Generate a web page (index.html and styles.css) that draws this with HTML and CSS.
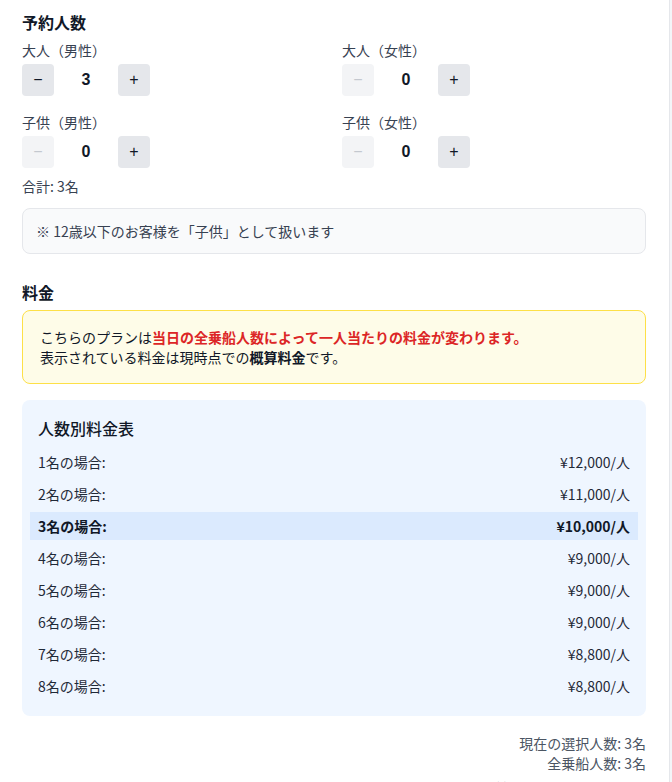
FILE: index.html
```html
<!DOCTYPE html>
<html lang="ja">
<head>
  <meta charset="utf-8">
  <title>予約人数と料金</title>
  <link rel="stylesheet" href="styles.css">
</head>
<body>
  <div class="page">
    <!-- 予約人数 -->
    <section class="section">
      <h2 class="section-title">予約人数</h2>
      <div class="counter-grid">
        <div class="counter-item">
          <div class="counter-label">大人（男性）</div>
          <div class="counter">
            <button class="counter-btn">&minus;</button>
            <span class="counter-value">3</span>
            <button class="counter-btn">+</button>
          </div>
        </div>
        <div class="counter-item">
          <div class="counter-label">大人（女性）</div>
          <div class="counter">
            <button class="counter-btn" disabled>&minus;</button>
            <span class="counter-value">0</span>
            <button class="counter-btn">+</button>
          </div>
        </div>
        <div class="counter-item">
          <div class="counter-label">子供（男性）</div>
          <div class="counter">
            <button class="counter-btn" disabled>&minus;</button>
            <span class="counter-value">0</span>
            <button class="counter-btn">+</button>
          </div>
        </div>
        <div class="counter-item">
          <div class="counter-label">子供（女性）</div>
          <div class="counter">
            <button class="counter-btn" disabled>&minus;</button>
            <span class="counter-value">0</span>
            <button class="counter-btn">+</button>
          </div>
        </div>
      </div>
      <div class="total">合計: 3名</div>
      <div class="note">※ 12歳以下のお客様を「子供」として扱います</div>
    </section>

    <!-- 料金 -->
    <section class="section section-price">
      <h2 class="section-title">料金</h2>
      <div class="notice">
        こちらのプランは<strong class="text-red">当日の全乗船人数によって一人当たりの料金が変わります。</strong><br>
        表示されている料金は現時点での<strong>概算料金</strong>です。
      </div>

      <div class="price-table">
        <h3 class="price-table-title">人数別料金表</h3>
        <div class="price-row"><span>1名の場合:</span><span>¥12,000/人</span></div>
        <div class="price-row"><span>2名の場合:</span><span>¥11,000/人</span></div>
        <div class="price-row is-current"><span>3名の場合:</span><span>¥10,000/人</span></div>
        <div class="price-row"><span>4名の場合:</span><span>¥9,000/人</span></div>
        <div class="price-row"><span>5名の場合:</span><span>¥9,000/人</span></div>
        <div class="price-row"><span>6名の場合:</span><span>¥9,000/人</span></div>
        <div class="price-row"><span>7名の場合:</span><span>¥8,800/人</span></div>
        <div class="price-row"><span>8名の場合:</span><span>¥8,800/人</span></div>
      </div>

      <div class="summary">
        <div>現在の選択人数: 3名</div>
        <div>全乗船人数: 3名</div>
        <div class="summary-total">概算合計金額: ¥30,000</div>
      </div>
    </section>
  </div>
</body>
</html>
```

FILE: styles.css
```css
/* Base */
body {
  margin: 0;
  background-color: #f3f5f8;
  font-family: "Noto Sans CJK JP", "Noto Sans", sans-serif;
  color: #111827;
}
.page {
  box-sizing: border-box;
  width: 670px;
  min-height: 100vh;
  padding: 10px 23px 0 22px;
  background-color: #fff;
  border-right: 1px solid #e5e7eb;
}
.section-title {
  margin: 0 0 6px;
  font-size: 16px;
  line-height: 24px;
  font-weight: 700;
}
.section-price {
  margin-top: 26px;
}

/* Counters */
.counter-grid {
  display: grid;
  grid-template-columns: 1fr 1fr;
  column-gap: 16px;
  row-gap: 16px;
}
.counter-label {
  font-size: 14px;
  line-height: 20px;
  color: #374151;
  margin-bottom: 4px;
}
.counter {
  display: flex;
  align-items: center;
}
.counter-btn {
  width: 32px;
  height: 32px;
  padding: 0;
  border: none;
  border-radius: 4px;
  background-color: #e5e7eb;
  color: #111827;
  font-family: "Liberation Sans", sans-serif;
  font-size: 16px;
  line-height: 32px;
  cursor: pointer;
}
.counter-btn:disabled {
  background-color: #f3f4f6;
  color: #c4c8cf;
  cursor: default;
}
.counter-value {
  width: 64px;
  text-align: center;
  font-family: "Liberation Sans", sans-serif;
  font-weight: 700;
  font-size: 16px;
}
.total {
  margin-top: 8px;
  font-size: 14px;
  line-height: 20px;
  color: #374151;
}
.note {
  margin-top: 12px;
  padding: 12px 13px;
  background-color: #f9fafb;
  border: 1px solid #e5e7eb;
  border-radius: 8px;
  font-size: 14px;
  line-height: 20px;
  color: #374151;
}

/* Pricing */
.notice {
  padding: 16px 17px;
  background-color: #fefce8;
  border: 1px solid #fde047;
  border-radius: 8px;
  font-size: 14px;
  line-height: 20px;
  color: #111827;
}
.notice strong {
  font-weight: 700;
}
.text-red {
  color: #dc2626;
}
.price-table {
  margin-top: 16px;
  padding: 16px;
  background-color: #eff6ff;
  border-radius: 8px;
}
.price-table-title {
  margin: 0 0 8px;
  font-size: 16px;
  line-height: 24px;
  font-weight: 500;
}
.price-row {
  display: flex;
  justify-content: space-between;
  margin: 0 -8px 4px;
  padding: 4px 8px;
  font-size: 14px;
  line-height: 20px;
  color: #1f2937;
}
.price-row:last-child {
  margin-bottom: 0;
}
.price-row.is-current {
  background-color: #dbeafe;
  font-weight: 700;
  color: #111827;
}
.summary {
  margin-top: 17px;
  text-align: right;
  font-size: 14px;
  line-height: 20px;
  color: #4b5563;
}
.summary-total {
  margin-top: 4px;
  font-size: 16px;
  line-height: 24px;
  font-weight: 700;
  color: #111827;
}
```
